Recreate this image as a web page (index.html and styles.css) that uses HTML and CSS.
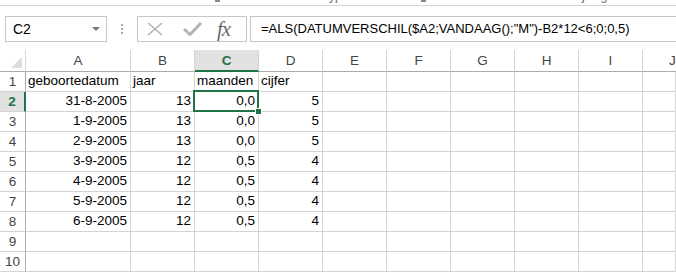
FILE: index.html
```html
<!DOCTYPE html>
<html lang="nl">
  <head>
    <meta charset="UTF-8" />
    <title>Excel - cijfers</title>
    <link rel="stylesheet" href="styles.css">
  </head>
  <body>
    <div class="ribbon-foot">
      <span class="grp grp-klembord">Klembord</span>
      <span class="launcher l1"></span>
      <span class="grp grp-letter">Lettertype</span>
      <span class="launcher l2"></span>
      <span class="grp grp-uitlijning">Uitlijning</span>
    </div>

    <div class="formula-bar">
      <div class="namebox">
        <span>C2</span>
        <span class="arrow"></span>
      </div>
      <div class="dots"><i></i><i></i><i></i></div>
      <div class="fxbox">
        <svg class="ico-x" width="16" height="14" viewBox="0 0 16 14">
          <path d="M1 1 L15 13 M15 1 L1 13" stroke="#b4b4b4" stroke-width="1.6" fill="none" />
        </svg>
        <svg class="ico-ok" width="19" height="14" viewBox="0 0 19 14">
          <path d="M1 7 L7 12.5 L18 1" stroke="#b4b4b4" stroke-width="3" fill="none" />
        </svg>
        <span class="fx">fx</span>
      </div>
      <div class="formula">=ALS(DATUMVERSCHIL($A2;VANDAAG();"M")-B2*12&lt;6;0;0,5)</div>
    </div>

    <div class="sheet">
      <div class="corner"><span class="tri"></span></div>
      <div class="colhead">A</div>
      <div class="colhead">B</div>
      <div class="colhead sel">C</div>
      <div class="colhead">D</div>
      <div class="colhead">E</div>
      <div class="colhead">F</div>
      <div class="colhead">G</div>
      <div class="colhead">H</div>
      <div class="colhead">I</div>
      <div class="colhead last">J</div>

      <div class="rowhead">1</div>
      <div class="cell">geboortedatum</div>
      <div class="cell">jaar</div>
      <div class="cell">maanden</div>
      <div class="cell">cijfer</div>
      <div class="cell"></div><div class="cell"></div><div class="cell"></div><div class="cell"></div><div class="cell"></div><div class="cell"></div>

      <div class="rowhead sel">2</div>
      <div class="cell num">31-8-2005</div>
      <div class="cell num">13</div>
      <div class="cell num active">0,0<span class="handle"></span></div>
      <div class="cell num">5</div>
      <div class="cell"></div><div class="cell"></div><div class="cell"></div><div class="cell"></div><div class="cell"></div><div class="cell"></div>

      <div class="rowhead">3</div>
      <div class="cell num">1-9-2005</div>
      <div class="cell num">13</div>
      <div class="cell num">0,0</div>
      <div class="cell num">5</div>
      <div class="cell"></div><div class="cell"></div><div class="cell"></div><div class="cell"></div><div class="cell"></div><div class="cell"></div>

      <div class="rowhead">4</div>
      <div class="cell num">2-9-2005</div>
      <div class="cell num">13</div>
      <div class="cell num">0,0</div>
      <div class="cell num">5</div>
      <div class="cell"></div><div class="cell"></div><div class="cell"></div><div class="cell"></div><div class="cell"></div><div class="cell"></div>

      <div class="rowhead">5</div>
      <div class="cell num">3-9-2005</div>
      <div class="cell num">12</div>
      <div class="cell num">0,5</div>
      <div class="cell num">4</div>
      <div class="cell"></div><div class="cell"></div><div class="cell"></div><div class="cell"></div><div class="cell"></div><div class="cell"></div>

      <div class="rowhead">6</div>
      <div class="cell num">4-9-2005</div>
      <div class="cell num">12</div>
      <div class="cell num">0,5</div>
      <div class="cell num">4</div>
      <div class="cell"></div><div class="cell"></div><div class="cell"></div><div class="cell"></div><div class="cell"></div><div class="cell"></div>

      <div class="rowhead">7</div>
      <div class="cell num">5-9-2005</div>
      <div class="cell num">12</div>
      <div class="cell num">0,5</div>
      <div class="cell num">4</div>
      <div class="cell"></div><div class="cell"></div><div class="cell"></div><div class="cell"></div><div class="cell"></div><div class="cell"></div>

      <div class="rowhead">8</div>
      <div class="cell num">6-9-2005</div>
      <div class="cell num">12</div>
      <div class="cell num">0,5</div>
      <div class="cell num">4</div>
      <div class="cell"></div><div class="cell"></div><div class="cell"></div><div class="cell"></div><div class="cell"></div><div class="cell"></div>

      <div class="rowhead">9</div>
      <div class="cell"></div><div class="cell"></div><div class="cell"></div><div class="cell"></div><div class="cell"></div>
      <div class="cell"></div><div class="cell"></div><div class="cell"></div><div class="cell"></div><div class="cell"></div>

      <div class="rowhead">10</div>
      <div class="cell"></div><div class="cell"></div><div class="cell"></div><div class="cell"></div><div class="cell"></div>
      <div class="cell"></div><div class="cell"></div><div class="cell"></div><div class="cell"></div><div class="cell"></div>
    </div>
  </body>
</html>
```

FILE: styles.css
```css
body {
  margin: 0;
  background: #fff;
  font-family: "Liberation Sans", Arial, sans-serif;
  font-size: 13.5px;
  color: #000;
  overflow: hidden;
}

/* onderkant van het lint */
.ribbon-foot {
  height: 5px;
  border-bottom: 1px solid #d5d5d5;
  overflow: hidden;
  display: flex;
  align-items: flex-start;
}
.grp {
  display: block;
  font-size: 12px;
  line-height: 14px;
  margin-top: -11px;
  color: #666;
  white-space: nowrap;
}
.grp-klembord {
  margin-left: 80px;
  width: 48px;
}
.grp-letter {
  margin-left: 75px;
  width: 48px;
}
.grp-uitlijning {
  margin-left: 136px;
}
.launcher {
  display: block;
  width: 5px;
  height: 2px;
  background: #888;
  margin-left: 87px;
}
.l2 {
  margin-left: 78px;
}

/* formulebalk */
.formula-bar {
  height: 44px;
  display: flex;
  align-items: flex-start;
  padding-top: 10px;
  box-sizing: border-box;
}
.namebox {
  margin-left: 5px;
  width: 102px;
  height: 26px;
  box-sizing: border-box;
  border: 1px solid #c6c6c6;
  display: flex;
  align-items: center;
  justify-content: space-between;
  padding: 0 6px 0 7px;
  font-size: 14px;
}
.arrow {
  width: 0;
  height: 0;
  border-left: 4px solid transparent;
  border-right: 4px solid transparent;
  border-top: 4px solid #777;
}
.dots {
  width: 30px;
  height: 26px;
  display: flex;
  flex-direction: column;
  align-items: center;
  justify-content: center;
  gap: 2px;
}
.dots i {
  width: 2px;
  height: 2px;
  background: #a8a8a8;
}
.fxbox {
  width: 110px;
  height: 26px;
  box-sizing: border-box;
  border: 1px solid #c6c6c6;
  display: flex;
  align-items: center;
  padding-left: 9px;
}
.ico-x {
  margin-right: 20px;
}
.ico-ok {
  margin-right: 15px;
}
.fx {
  font-family: "Liberation Serif", "Times New Roman", serif;
  font-style: italic;
  font-size: 21px;
  color: #6a6a6a;
  letter-spacing: -1px;
}
.formula {
  margin-left: 3px;
  flex: 1;
  height: 26px;
  box-sizing: border-box;
  border: 1px solid #c6c6c6;
  border-right: none;
  padding-left: 10px;
  line-height: 24px;
  white-space: nowrap;
  font-size: 13px;
}

/* werkblad */
.sheet {
  display: grid;
  grid-template-columns: 26px 105px repeat(8, 64px) 1fr;
  grid-template-rows: 22px repeat(10, 20px);
}
.corner {
  border-right: 1px solid #d4d4d4;
  border-bottom: 1px solid #ababab;
  display: flex;
  align-items: flex-end;
  justify-content: flex-end;
  padding: 0 3px 3px 0;
}
.tri {
  width: 0;
  height: 0;
  border-left: 11px solid transparent;
  border-bottom: 11px solid #dcdcdc;
}
.colhead {
  border-right: 1px solid #d4d4d4;
  border-bottom: 1px solid #ababab;
  text-align: center;
  line-height: 22px;
  color: #444;
  font-size: 13.5px;
}
.colhead.last {
  border-right: none;
  text-align: left;
  padding-left: 26px;
}
.colhead.sel {
  background: #e1e1e1;
  border-bottom: 2px solid #217346;
  color: #217346;
  font-weight: bold;
}
.rowhead {
  border-right: 1px solid #ababab;
  border-bottom: 1px solid #d4d4d4;
  text-align: center;
  line-height: 19px;
  color: #444;
}
.rowhead.sel {
  background: #e1e1e1;
  border-right: 2px solid #217346;
  color: #217346;
  font-weight: bold;
}
.cell {
  border-right: 1px solid #d4d4d4;
  border-bottom: 1px solid #d4d4d4;
  padding: 0 2px;
  line-height: 17px;
  white-space: nowrap;
  overflow: visible;
}
.num {
  text-align: right;
  padding-right: 3px;
}
.active {
  position: relative;
}
.active::before {
  content: "";
  position: absolute;
  left: -2px;
  top: -2px;
  right: -1px;
  bottom: -1px;
  border: 2px solid #217346;
}
.handle {
  position: absolute;
  right: -4px;
  bottom: -4px;
  width: 5px;
  height: 5px;
  background: #217346;
  border: 1px solid #fff;
}
```
